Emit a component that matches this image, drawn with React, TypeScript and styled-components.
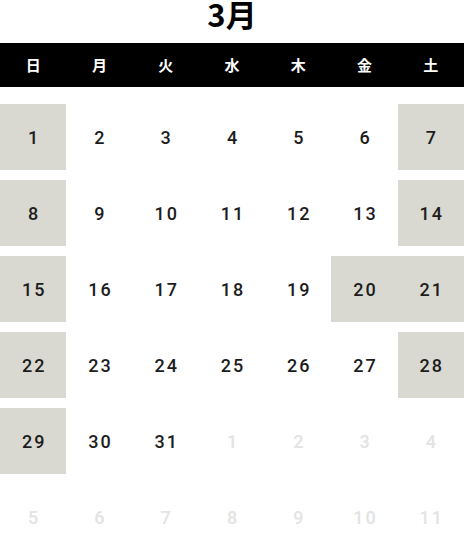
import styled, { createGlobalStyle } from "styled-components";

const GlobalStyle = createGlobalStyle`
  html, body {
    margin: 0;
    padding: 0;
    background: #ffffff;
  }
  body {
    font-family: Roboto, "Noto Sans CJK JP", sans-serif;
  }
`;

const WEEKDAYS = ["日", "月", "火", "水", "木", "金", "土"];

type Day = { n: number; muted?: boolean; holiday?: boolean };

const buildDays = (): Day[] => {
  const days: Day[] = [];
  const holidays = [20];
  for (let i = 1; i <= 31; i++) {
    const col = (i - 1) % 7;
    days.push({ n: i, holiday: col === 0 || col === 6 || holidays.includes(i) });
  }
  for (let i = 1; i <= 11; i++) days.push({ n: i, muted: true });
  return days;
};

export default function App() {
  const days = buildDays();
  return (
    <>
      <GlobalStyle />
      <Wrap>
        <Title>3月</Title>
        <WeekBar>
          {WEEKDAYS.map((w) => (
            <WeekCell key={w}>{w}</WeekCell>
          ))}
        </WeekBar>
        <Grid>
          {days.map((d, i) => (
            <DayCell key={i} $holiday={d.holiday} $muted={d.muted}>
              {d.n}
            </DayCell>
          ))}
        </Grid>
      </Wrap>
    </>
  );
}

const Wrap = styled.div({
  width: "464px",
  display: "flex",
  flexDirection: "column",
});

const Title = styled.h2({
  margin: 0,
  height: "43px",
  textAlign: "center",
  fontFamily: '"Noto Sans CJK JP", sans-serif',
  fontWeight: 700,
  fontSize: "31px",
  lineHeight: "27px",
  color: "#000",
});

const WeekBar = styled.div({
  display: "grid",
  gridTemplateColumns: "repeat(7, 1fr)",
  height: "44px",
  background: "#000",
  alignItems: "center",
});

const WeekCell = styled.div({
  textAlign: "center",
  color: "#fff",
  fontFamily: '"Noto Sans CJK JP", sans-serif',
  fontWeight: 700,
  fontSize: "15px",
  lineHeight: "44px",
});

const Grid = styled.div({
  display: "grid",
  gridTemplateColumns: "repeat(7, 1fr)",
  gridAutoRows: "66px",
  rowGap: "10px",
  marginTop: "17px",
});

const DayCell = styled.div<{ $holiday?: boolean; $muted?: boolean }>`
  display: flex;
  align-items: center;
  justify-content: center;
  font-family: Roboto, sans-serif;
  font-weight: 500;
  font-size: 18px;
  letter-spacing: 2px;
  padding-left: 2px;
  color: ${(p) => (p.$muted ? "#e3e3e3" : "#1c1c1c")};
  background: ${(p) => (p.$holiday ? "#d9d9d1" : "transparent")};
`;
